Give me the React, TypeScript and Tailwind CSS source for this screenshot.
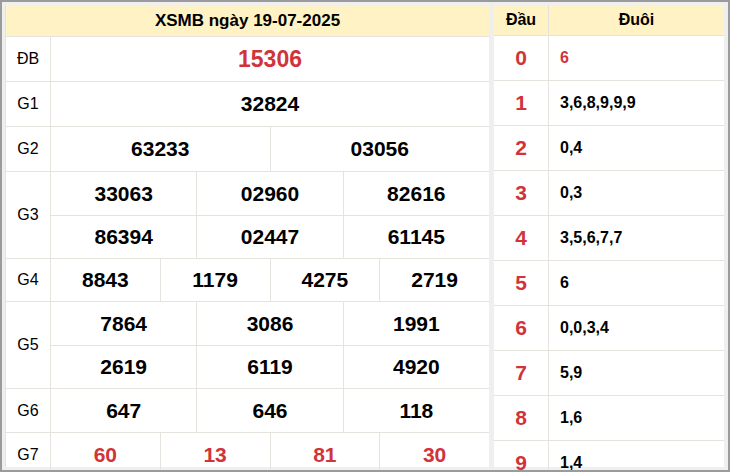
const F = { fontFamily: '"Liberation Sans", Arial, sans-serif' };
const B = 'border-[#e6e2dd]';

function Row({ label, h, rows, red, big }: { label: string; h: number; rows: string[][]; red?: boolean; big?: boolean }) {
  return (
    <div className={`flex border-b ${B}`}>
      <div className={`w-[45px] shrink-0 flex items-center justify-center text-[16px] border-r ${B}`}>{label}</div>
      <div className="flex-1 flex flex-col">
        {rows.map((r, i) => (
          <div key={i} className={`flex ${i > 0 ? `border-t ${B}` : ''}`} style={{ height: h }}>
            {r.map((n, j) => (
              <div key={j} className={`flex-1 flex items-center justify-center font-bold ${big ? 'text-[23px]' : 'text-[21px]'} ${red ? 'text-[#d0343a]' : 'text-black'} ${j > 0 ? `border-l ${B}` : ''}`}>{n}</div>
            ))}
          </div>
        ))}
      </div>
    </div>
  );
}

export default function App() {
  const tails = ['6', '3,6,8,9,9,9', '0,4', '0,3', '3,5,6,7,7', '6', '0,0,3,4', '5,9', '1,6', '1,4'];
  return (
    <div style={F} className="w-[730px] h-[472px] overflow-hidden border-2 border-[#9b9b9b] bg-[#efefef] p-[3px] flex gap-[5px] text-black">
      <div className="w-[484px] bg-white border-l border-[#e6e2dd]">
        <div className={`h-[32px] bg-[#fff2c4] border-b ${B} flex items-center justify-center font-bold text-[17px]`}>XSMB ngày 19-07-2025</div>
        <Row label="ĐB" h={44} rows={[['15306']]} red big />
        <Row label="G1" h={44} rows={[['32824']]} />
        <Row label="G2" h={44} rows={[['63233', '03056']]} />
        <Row label="G3" h={43} rows={[['33063', '02960', '82616'], ['86394', '02447', '61145']]} />
        <Row label="G4" h={42} rows={[['8843', '1179', '4275', '2719']]} />
        <Row label="G5" h={43} rows={[['7864', '3086', '1991'], ['2619', '6119', '4920']]} />
        <Row label="G6" h={43} rows={[['647', '646', '118']]} />
        <Row label="G7" h={43} rows={[['60', '13', '81', '30']]} red />
      </div>
      <div className="w-[230px] bg-white">
        <div className={`h-[31px] bg-[#fff2c4] border-b ${B} flex font-bold text-[16px]`}>
          <div className={`w-[55px] flex items-center justify-center border-r ${B}`}>Đầu</div>
          <div className="flex-1 flex items-center justify-center">Đuôi</div>
        </div>
        {tails.map((t, i) => (
          <div key={i} className={`h-[45px] flex border-b ${B}`}>
            <div className={`w-[55px] flex items-center justify-center border-r ${B} font-bold text-[21px] text-[#d0343a]`}>{i}</div>
            <div className={`flex-1 flex items-center pl-[11px] font-bold text-[16px] ${i === 0 ? 'text-[#d0343a]' : ''}`}>{t}</div>
          </div>
        ))}
      </div>
    </div>
  );
}
